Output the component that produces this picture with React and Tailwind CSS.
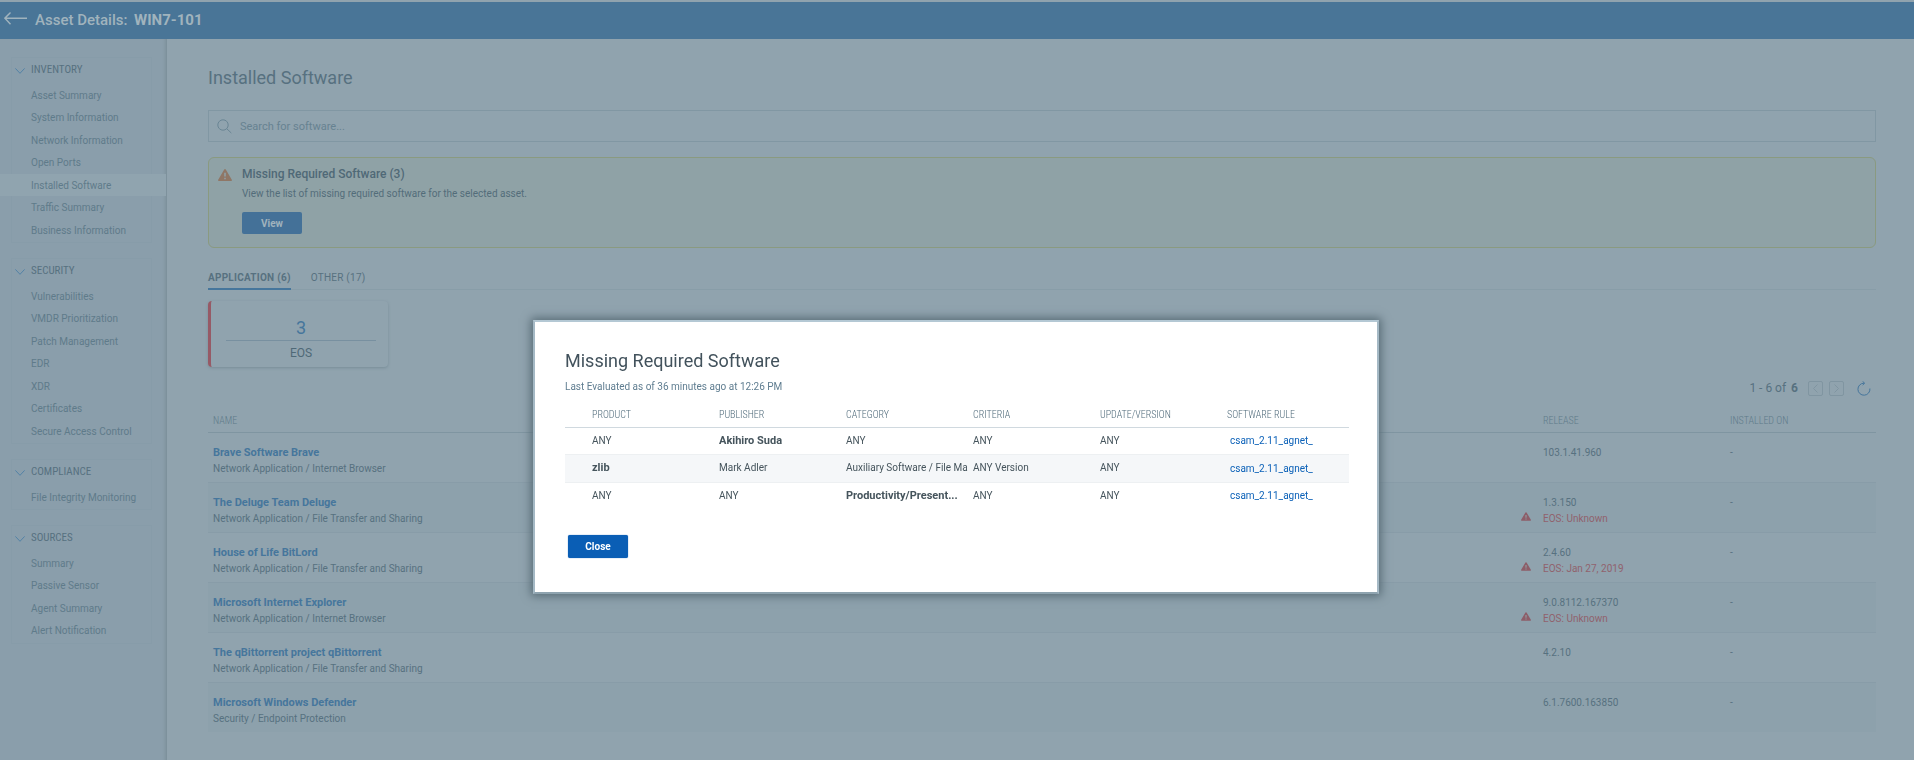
import React, { useState } from 'react';
import clsx from 'clsx';

const NAV_GROUPS = [
  {
    title: 'INVENTORY',
    items: [
      'Asset Summary',
      'System Information',
      'Network Information',
      'Open Ports',
      'Installed Software',
      'Traffic Summary',
      'Business Information',
    ],
  },
  {
    title: 'SECURITY',
    items: [
      'Vulnerabilities',
      'VMDR Prioritization',
      'Patch Management',
      'EDR',
      'XDR',
      'Certificates',
      'Secure Access Control',
    ],
  },
  { title: 'COMPLIANCE', items: ['File Integrity Monitoring'] },
  { title: 'SOURCES', items: ['Summary', 'Passive Sensor', 'Agent Summary', 'Alert Notification'] },
];

const SOFTWARE = [
  { name: 'Brave Software Brave', category: 'Network Application / Internet Browser', release: '103.1.41.960' },
  { name: 'The Deluge Team Deluge', category: 'Network Application / File Transfer and Sharing', release: '1.3.150', eos: 'EOS: Unknown' },
  { name: 'House of Life BitLord', category: 'Network Application / File Transfer and Sharing', release: '2.4.60', eos: 'EOS: Jan 27, 2019' },
  { name: 'Microsoft Internet Explorer', category: 'Network Application / Internet Browser', release: '9.0.8112.167370', eos: 'EOS: Unknown' },
  { name: 'The qBittorrent project qBittorrent', category: 'Network Application / File Transfer and Sharing', release: '4.2.10' },
  { name: 'Microsoft Windows Defender', category: 'Security / Endpoint Protection', release: '6.1.7600.163850' },
];

const MISSING_COLUMNS = ['PRODUCT', 'PUBLISHER', 'CATEGORY', 'CRITERIA', 'UPDATE/VERSION', 'SOFTWARE RULE'];

// strong = index of the cell the rule matches on
const MISSING = [
  { cells: ['ANY', 'Akihiro Suda', 'ANY', 'ANY', 'ANY'], strong: 1, rule: 'csam_2.11_agnet_' },
  { cells: ['zlib', 'Mark Adler', 'Auxiliary Software / File Ma', 'ANY Version', 'ANY'], strong: 0, rule: 'csam_2.11_agnet_' },
  { cells: ['ANY', 'ANY', 'Productivity/Present...', 'ANY', 'ANY'], strong: 2, rule: 'csam_2.11_agnet_' },
];

function WarningIcon({ className }) {
  return (
    <svg viewBox="0 0 14 12" className={className} aria-hidden="true">
      <path d="M6.2.5a.9.9 0 0 1 1.6 0l6 10.2a.9.9 0 0 1-.8 1.3H1a.9.9 0 0 1-.8-1.3z" fill="currentColor" />
      <path d="M7 3.8v3.8M7 8.8v1.5" stroke="#90a3a9" strokeWidth="1.5" />
    </svg>
  );
}

function Sidebar() {
  return (
    <nav className="w-[167px] shrink-0 bg-[#8a9eab] border-r border-[#7d919c] shadow-[inset_-3px_0_3px_-2px_#7d919c] pt-[18px] flex flex-col gap-[15px]">
      {NAV_GROUPS.map((group) => (
        <section key={group.title} className="ml-[11px] mr-[14px] border border-[#879ca9]">
          <button className="flex items-center gap-[6px] h-[26px] pl-[3px] pb-px">
            <svg viewBox="0 0 10 6" className="w-[10px] h-[6px] text-[#5382a6]" fill="none" stroke="currentColor" aria-hidden="true">
              <path d="M.4.4 5 5.3 9.6.4" />
            </svg>
            <span className="font-['Roboto_Condensed','Liberation_Sans_Narrow','Liberation_Sans',sans-serif] text-[11px] text-[#577180]">
              {group.title}
            </span>
          </button>
          <ul className="pb-px">
            {group.items.map((item) => (
              <li
                key={item}
                className={clsx(
                  '-ml-3 -mr-[15px] pl-[31px] odd:h-[22px] even:h-[23px] flex items-center',
                  item === 'Installed Software' && 'bg-[#90a4af]'
                )}
              >
                <a href="#" className="text-[10px] text-[#5f7b8a]">{item}</a>
              </li>
            ))}
          </ul>
        </section>
      ))}
    </nav>
  );
}

function PagerButton({ label, d }) {
  return (
    <button aria-label={label} className="size-[15px] border border-[#8095a1] rounded-xs text-[#8095a1]">
      <svg viewBox="0 0 13 13" className="size-[13px]" fill="none" stroke="currentColor">
        <path d={d} />
      </svg>
    </button>
  );
}

function SoftwareTable() {
  return (
    <table className="w-full table-fixed text-left text-[10px] text-[#577180]">
      <thead>
        <tr className="h-6 border-b border-[#7f95a1] font-['Roboto_Condensed','Liberation_Sans_Narrow','Liberation_Sans',sans-serif] text-[#5f7b8a]">
          <th className="pl-[5px] pt-px font-light">NAME</th>
          <th className="w-[27px]" aria-label="Status"></th>
          <th className="pl-[5px] pt-px w-[187px] font-light">RELEASE</th>
          <th className="pl-[5px] pt-px w-[151px] font-light">INSTALLED ON</th>
        </tr>
      </thead>
      <tbody>
        {SOFTWARE.map((row) => (
          <tr key={row.name} className="h-[50px] align-top even:bg-[#8da1ac] border-b border-[#889ca8] last:border-0">
            <td className="pl-[5px] pt-3">
              <a href="#" className="block text-[11px] leading-4 font-bold text-[#46769c]">{row.name}</a>
              <div className="leading-4">{row.category}</div>
            </td>
            <td className="pt-[29px] pl-[10px]">
              {row.eos && <WarningIcon className="w-[10px] h-[9px] text-[#8d5d68]" />}
            </td>
            <td className="pl-[5px] pt-3 leading-4">
              <div>{row.release}</div>
              {row.eos && <div className="text-[#91626d]">{row.eos}</div>}
            </td>
            <td className="pl-[5px] pt-3 leading-4">-</td>
          </tr>
        ))}
      </tbody>
    </table>
  );
}

function MissingSoftwareDialog({ onClose }) {
  return (
    <div className="fixed inset-0 flex items-start justify-center pt-[320px] pr-[2px]">
      <div
        role="dialog"
        aria-labelledby="missing-title"
        className="w-[846px] bg-white border-2 border-[#a5b9c5] border-t-[#b4c8d4] border-b-[#8ea3af] shadow-[0_0_9px_2px_#566a74] px-[30px] pt-[29px] pb-[34px]"
      >
        <h2 id="missing-title" className="text-lg leading-5 text-[#42525c]">Missing Required Software</h2>
        <p className="mt-2 text-[10px] leading-4 text-[#5f7d90]">Last Evaluated as of 36 minutes ago at 12:26 PM</p>

        <table className="mt-[7px] w-full table-fixed text-left text-[10px] text-[#45545c]">
          <thead>
            <tr className="h-[25px] border-b border-[#d0d9df] font-['Roboto_Condensed','Liberation_Sans_Narrow','Liberation_Sans',sans-serif] text-[#4f6a7a]">
              {MISSING_COLUMNS.map((col) => (
                <th key={col} className="w-[127px] first:w-[149px] pl-[5px] first:pl-[27px] font-light">{col}</th>
              ))}
            </tr>
          </thead>
          <tbody>
            {MISSING.map((row, i) => (
              <tr key={i} className="h-[27px] even:h-7 even:bg-[#f5f7f9] border-b border-[#edf0f2] last:border-0">
                {row.cells.map((cell, j) => (
                  <td key={j} className="pl-[5px] first:pl-[27px]">
                    <div className={clsx('whitespace-nowrap leading-4', row.strong === j && 'text-[11px] font-bold')}>
                      {cell}
                    </div>
                  </td>
                ))}
                <td className="pl-2">
                  <a href="#" className="text-[#0b61b8]">{row.rule}</a>
                </td>
              </tr>
            ))}
          </tbody>
        </table>

        <button
          onClick={onClose}
          className="mt-[26px] ml-[3px] w-[60px] h-[23px] block rounded-xs bg-[#0a5eb5] text-[10px] font-bold text-white shadow-[0_0_1px_#0a5eb5]"
        >
          Close
        </button>
      </div>
    </div>
  );
}

export default function App() {
  const [open, setOpen] = useState(true);

  return (
    <div className="min-h-screen flex flex-col bg-[#90a3ae] border-t-2 border-[#90a3ae] font-[Roboto,sans-serif] text-[#577180]">
      <header className="h-[37px] bg-[#497597] flex items-center pl-1 gap-2 text-[#a0b3bd]">
        <button aria-label="Back" className="pb-1">
          <svg viewBox="0 0 23 13" className="w-[23px] h-[13px]" fill="none" stroke="currentColor" strokeWidth="1.4" aria-hidden="true">
            <path d="M6.5.6.9 6.2l5.6 6M1 6.2h22" />
          </svg>
        </button>
        <h1 className="text-[15px] font-medium">
          Asset Details: <span className="ml-[3px] font-bold">WIN7-101</span>
        </h1>
      </header>

      <div className="flex flex-1">
        <Sidebar />

        <main className="flex-1 min-w-0 pl-[41px] pr-[38px] pt-7 pb-[29px]">
          <h2 className="text-lg leading-[22px]">Installed Software</h2>

          <label className="mt-[21px] h-8 flex items-center gap-2 px-2 border border-[#8197a3]">
            <svg viewBox="0 0 15 15" className="size-[15px] text-[#6a8594]" fill="none" stroke="currentColor" aria-hidden="true">
              <circle cx="6" cy="6" r="5.2" />
              <path d="m9.8 9.8 4.5 4.2" />
            </svg>
            <input
              type="text"
              aria-label="Search for software"
              placeholder="Search for software..."
              className="flex-1 pt-[2px] text-[11px] outline-none placeholder:text-[#678291]"
            />
          </label>

          <section className="mt-[15px] h-[91px] border border-[#8a9a80] rounded-md bg-[#8fa2a6] pl-[9px] pt-[7px] flex gap-[10px]">
            <WarningIcon className="mt-1 w-[14px] h-3 shrink-0 text-[#8f7766]" />
            <div>
              <h3 className="text-xs leading-[18px] font-medium text-[#4f6977]">Missing Required Software (3)</h3>
              <p className="mt-[3px] text-[10px] leading-4 text-[#536d7a]">View the list of missing required software for the selected asset.</p>
              <button
                onClick={() => setOpen(true)}
                className="mt-[10px] w-[60px] h-[22px] block rounded-xs bg-[#447198] text-[10px] font-bold text-[#a0b3bd]"
              >
                View
              </button>
            </div>
          </section>

          <div role="tablist" className="mt-[18px] flex gap-5 border-b border-[#889da8] text-[10px]">
            <button role="tab" aria-selected="true" className="h-6 -mb-px pt-px border-b-2 border-[#46769c] font-bold tracking-wide">
              APPLICATION (6)
            </button>
            <button role="tab" aria-selected="false" className="h-6 -mb-px pt-px border-b-2 border-transparent tracking-wide">
              OTHER (17)
            </button>
          </div>

          <div className="mt-[11px] w-[180px] h-[66px] border-l-3 border-[#965a66] rounded-sm shadow-[0_1px_3px_#788d98] pl-[15px] pr-3 pt-4 text-center">
            <a href="#" className="block text-lg leading-5 text-[#46769c] pt-px pb-[2px] border-b border-[#7890a0]">3</a>
            <div className="mt-1 text-xs leading-4 text-[#4f6977]">EOS</div>
          </div>

          <div className="mt-[13px] h-4 flex items-center justify-end gap-[6px] pr-[5px] text-xs">
            <span className="mr-1">1 - 6 of <b className="ml-[2px] font-bold">6</b></span>
            <PagerButton label="Previous page" d="M8.5 2.5l-4 4 4 4" />
            <PagerButton label="Next page" d="m4.5 2.5 4 4-4 4" />
            <button aria-label="Refresh" className="ml-[7px] text-[#46769c]">
              <svg viewBox="0 0 14 15" className="w-[14px] h-[15px]" fill="none" stroke="currentColor">
                <path d="M12.9 7.5A6 6 0 1 1 7 2.2M5.6.4l2.1 1.8-2 1.9" />
              </svg>
            </button>
          </div>

          <div className="mt-3">
            <SoftwareTable />
          </div>
        </main>
      </div>

      {open && <MissingSoftwareDialog onClose={() => setOpen(false)} />}
    </div>
  );
}
